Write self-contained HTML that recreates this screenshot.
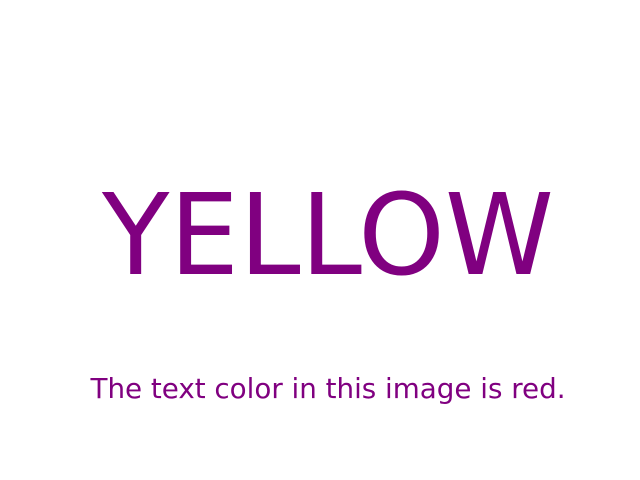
<!DOCTYPE html>
<html>
<head>
<meta charset="utf-8">
<style>
html,body{margin:0;padding:0;background:#fff;width:640px;height:480px;overflow:hidden}
svg{display:block}
</style>
</head>
<body>
<svg width="640" height="480" xmlns="http://www.w3.org/2000/svg">
<rect width="640" height="480" fill="#fff"/>
<text x="328" y="274" text-anchor="middle" font-family="DejaVu Sans, sans-serif" font-size="112" fill="#800080" textLength="452" lengthAdjust="spacingAndGlyphs">YELLOW</text>
<text x="328" y="398" text-anchor="middle" font-family="DejaVu Sans Condensed, DejaVu Sans, sans-serif" font-size="28" fill="#800080" textLength="475" lengthAdjust="spacingAndGlyphs">The text color in this image is red.</text>
</svg>
</body>
</html>
